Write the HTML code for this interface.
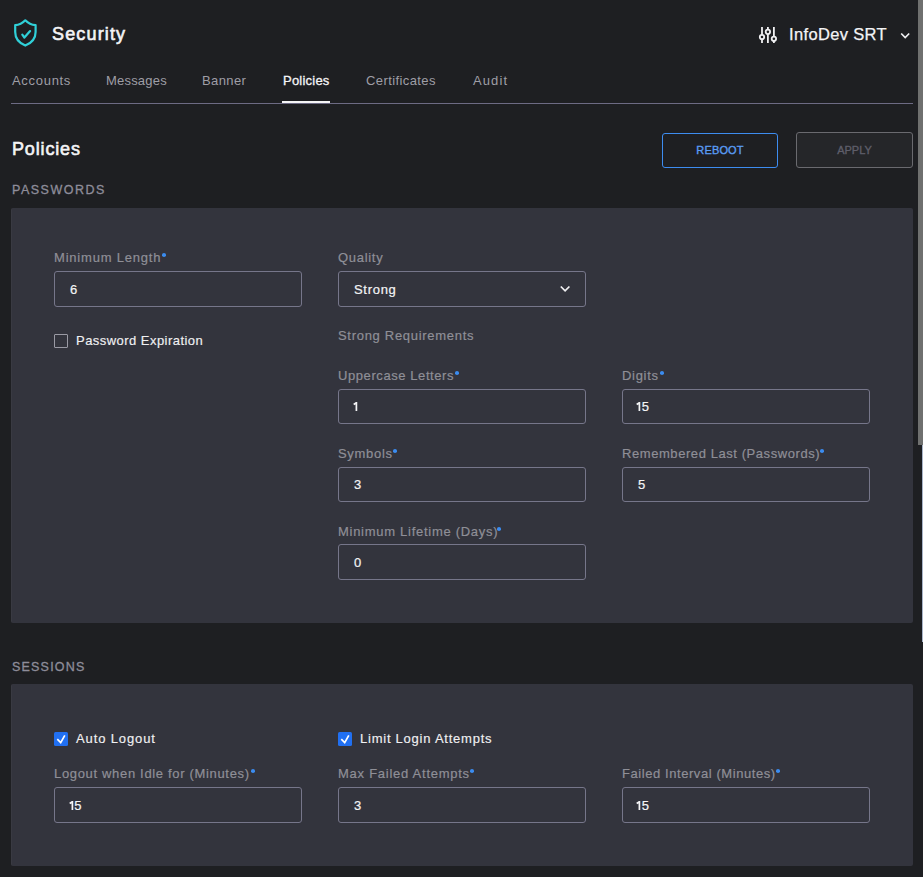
<!DOCTYPE html>
<html><head><meta charset="utf-8">
<style>
*{box-sizing:border-box;margin:0;padding:0}
html,body{width:923px;height:877px;overflow:hidden;background:#1e1f22;font-family:"Liberation Sans",sans-serif;}
.a{position:absolute;white-space:nowrap;line-height:1}
.title{left:52px;top:25px;font-size:18px;letter-spacing:1.15px;-webkit-text-stroke:0.6px #f4f4f6;color:#f4f4f6}
.tab{top:74px;font-size:13px;color:#9e9ea6;letter-spacing:0.4px}
.tabline{left:11px;top:103px;width:902px;height:1px;background:#6d6b84}
.tabact{left:282px;top:101px;width:48px;height:2px;background:#f4f4f6}
.h1{left:12px;top:140px;font-size:18px;color:#f4f4f6;-webkit-text-stroke:0.6px #f4f4f6;letter-spacing:0.85px}
.sec{left:12px;font-size:12.5px;color:#8e8d9a;letter-spacing:1.5px;-webkit-text-stroke:0.3px #8e8d9a}
.btn{border-radius:3px;font-size:11px;-webkit-text-stroke:0.35px currentColor;text-align:center;line-height:34px}
.panel{left:11px;width:902px;background:#33343d;border-radius:2px;border-left:1px solid #393a42}
.lbl{font-size:13px;color:#8f8f97;letter-spacing:0.7px;-webkit-text-stroke:0.2px #8f8f97}
.dot{position:absolute;width:4.4px;height:3.6px;border-radius:50%;background:#3b8cf0}
.inp{width:248px;height:35px;border:1px solid #76768a;border-radius:3px}
.val{font-size:13px;color:#f4f4f6;-webkit-text-stroke:0.2px #f4f4f6}
.chk{width:14px;height:14px;border:1px solid #9a9aa4;border-radius:1px}
.chkon{width:14px;height:14px;background:#2170f2;border-radius:1.5px}
.ct{font-size:13px;color:#f0f0f2;letter-spacing:0.6px;-webkit-text-stroke:0.15px #f0f0f2}
.sb{left:918px;top:0;width:5px;height:445px;background:#6f706f}
.sbt{left:922px;top:445px;width:1px;height:197px;background:#a8b4c8}
</style></head><body>
<svg class="a" style="left:13px;top:18px" width="26" height="30" viewBox="0 0 26 30">
<path d="M12.3 2.3 Q8 6.8 2.2 7.2 L2.2 14 C2.2 20.5 6 25 12.3 27.6 C18.6 25 22.6 20.5 22.6 14 L22.6 7.2 Q16.6 6.8 12.3 2.3 Z" fill="none" stroke="#30d0d8" stroke-width="2.2" stroke-linejoin="round"/>
<path d="M9.3 16.6 L11.4 19.6 L17.1 13.1" fill="none" stroke="#30d0d8" stroke-width="2.2" stroke-linecap="round" stroke-linejoin="round"/>
</svg>
<div class="a title">Security</div>

<svg class="a" style="left:758px;top:26px" width="20" height="18" viewBox="0 0 20 18">
<g stroke="#f0f0f2" stroke-width="1.8" fill="none">
<line x1="4" y1="0.9" x2="4" y2="8.8"/><line x1="4" y1="13.2" x2="4" y2="16.9"/><circle cx="4" cy="11" r="2.2"/>
<line x1="9.9" y1="0.9" x2="9.9" y2="3.6"/><line x1="9.9" y1="8.1" x2="9.9" y2="16.9"/><circle cx="9.9" cy="5.85" r="2.2"/>
<line x1="15.9" y1="0.9" x2="15.9" y2="10.6"/><line x1="15.9" y1="15" x2="15.9" y2="16.9"/><circle cx="15.9" cy="12.8" r="2.2"/>
</g></svg>
<div class="a" id="dev" style="left:789px;top:26px;font-size:16.5px;color:#f4f4f6;letter-spacing:0.35px;-webkit-text-stroke:0.25px #f4f4f6">InfoDev SRT</div>
<svg class="a" style="left:900px;top:32px" width="11" height="8" viewBox="0 0 11 8"><path d="M1.2 1.5 L5.2 5.5 L9.2 1.5" fill="none" stroke="#f0f0f2" stroke-width="1.7"/></svg>

<div class="a tab" style="left:12px;letter-spacing:0.7px">Accounts</div>
<div class="a tab" style="left:106px;letter-spacing:0.2px">Messages</div>
<div class="a tab" style="left:202px">Banner</div>
<div class="a tab" style="left:283px;color:#f4f4f6;letter-spacing:0.22px;-webkit-text-stroke:0.3px #f4f4f6">Policies</div>
<div class="a tab" style="left:366px">Certificates</div>
<div class="a tab" style="left:473px;letter-spacing:1.1px">Audit</div>
<div class="a tabline"></div>
<div class="a tabact"></div>

<div class="a h1">Policies</div>
<div class="a btn" style="left:662px;top:133px;width:116px;height:35px;line-height:32px;border:1px solid #3d8cf0;color:#5a9cf4;letter-spacing:0.15px">REBOOT</div>
<div class="a btn" style="left:796px;top:132px;width:117px;height:36px;border:1px solid #6a6a6f;background:#252629;color:#5e5e6a">APPLY</div>

<div class="a sec" style="top:184px">PASSWORDS</div>
<div class="a panel" style="top:208px;height:415px"></div>

<div class="a lbl" style="left:54px;top:251px;letter-spacing:0.8px">Minimum Length</div><div class="dot" style="left:162px;top:253px"></div>
<div class="a inp" style="left:54px;top:271px;height:36px"></div><div class="a val" style="left:70px;top:283px">6</div>
<div class="a chk" style="left:54px;top:334px"></div>
<div class="a ct" style="left:76px;top:334px;letter-spacing:0.46px">Password Expiration</div>

<div class="a lbl" style="left:338px;top:251px">Quality</div>
<div class="a inp" style="left:338px;top:271px;height:36px"></div><div class="a val" style="left:354px;top:283px;letter-spacing:0.7px">Strong</div>
<svg class="a" style="left:559px;top:285px" width="12" height="8" viewBox="0 0 12 8"><path d="M1.8 1.5 L6.1 5.8 L10.4 1.5" fill="none" stroke="#f0f0f2" stroke-width="1.7"/></svg>
<div class="a lbl" style="left:338px;top:329px">Strong Requirements</div>

<div class="a lbl" style="left:338px;top:369px;letter-spacing:0.58px">Uppercase Letters</div><div class="dot" style="left:455px;top:371px"></div>
<div class="a inp" style="left:338px;top:389px"></div><svg class="a" style="left:352.6px;top:402px" width="6" height="11" viewBox="0 0 6 11"><path d="M0.7 2.5 L3.4 0.7 V9.1" stroke="#f4f4f6" stroke-width="1.7" fill="none"/></svg>
<div class="a lbl" style="left:622px;top:369px">Digits</div><div class="dot" style="left:660px;top:371px"></div>
<div class="a inp" style="left:622px;top:389px"></div><svg class="a" style="left:636.4px;top:402px" width="6" height="11" viewBox="0 0 6 11"><path d="M0.7 2.5 L3.4 0.7 V9.1" stroke="#f4f4f6" stroke-width="1.7" fill="none"/></svg><div class="a val" style="left:641.8px;top:400px">5</div>

<div class="a lbl" style="left:338px;top:447px">Symbols</div><div class="dot" style="left:393px;top:449px"></div>
<div class="a inp" style="left:338px;top:467px"></div><div class="a val" style="left:354px;top:478px">3</div>
<div class="a lbl" style="left:622px;top:447px;letter-spacing:0.57px">Remembered Last (Passwords)</div><div class="dot" style="left:820px;top:449px"></div>
<div class="a inp" style="left:622px;top:467px"></div><div class="a val" style="left:638px;top:478px">5</div>

<div class="a lbl" style="left:338px;top:525px;letter-spacing:0.72px">Minimum Lifetime (Days)</div><div class="dot" style="left:497px;top:527px"></div>
<div class="a inp" style="left:338px;top:544px;height:36px"></div><div class="a val" style="left:354px;top:556px">0</div>

<div class="a sec" style="top:661px;letter-spacing:1.2px">SESSIONS</div>
<div class="a panel" style="top:684px;height:182px"></div>

<div class="a chkon" style="left:54px;top:732px"></div><svg class="a" style="left:54px;top:732px" width="14" height="14" viewBox="0 0 14 14"><path d="M3.3 7.2 L6.7 10.6 L10.8 3.3" fill="none" stroke="#fff" stroke-width="1.7"/></svg>
<div class="a ct" style="left:76px;top:732px;letter-spacing:0.88px">Auto Logout</div>
<div class="a chkon" style="left:338px;top:732px"></div><svg class="a" style="left:338px;top:732px" width="14" height="14" viewBox="0 0 14 14"><path d="M3.3 7.2 L6.7 10.6 L10.8 3.3" fill="none" stroke="#fff" stroke-width="1.7"/></svg>
<div class="a ct" style="left:360px;top:732px;letter-spacing:0.76px">Limit Login Attempts</div>

<div class="a lbl" style="left:54px;top:767px;letter-spacing:0.67px">Logout when Idle for (Minutes)</div><div class="dot" style="left:251px;top:769px"></div>
<div class="a inp" style="left:54px;top:787px;height:36px"></div><svg class="a" style="left:68.9px;top:801px" width="6" height="11" viewBox="0 0 6 11"><path d="M0.7 2.5 L3.4 0.7 V9.1" stroke="#f4f4f6" stroke-width="1.7" fill="none"/></svg><div class="a val" style="left:74.2px;top:799px">5</div>
<div class="a lbl" style="left:338px;top:767px;letter-spacing:0.74px">Max Failed Attempts</div><div class="dot" style="left:470px;top:769px"></div>
<div class="a inp" style="left:338px;top:787px;height:36px"></div><div class="a val" style="left:354px;top:799px">3</div>
<div class="a lbl" style="left:622px;top:767px;letter-spacing:0.57px">Failed Interval (Minutes)</div><div class="dot" style="left:776px;top:769px"></div>
<div class="a inp" style="left:622px;top:787px;height:36px"></div><svg class="a" style="left:636.4px;top:801px" width="6" height="11" viewBox="0 0 6 11"><path d="M0.7 2.5 L3.4 0.7 V9.1" stroke="#f4f4f6" stroke-width="1.7" fill="none"/></svg><div class="a val" style="left:641.8px;top:799px">5</div>

<div class="a sb"></div>
<div class="a sbt"></div>
</body></html>
